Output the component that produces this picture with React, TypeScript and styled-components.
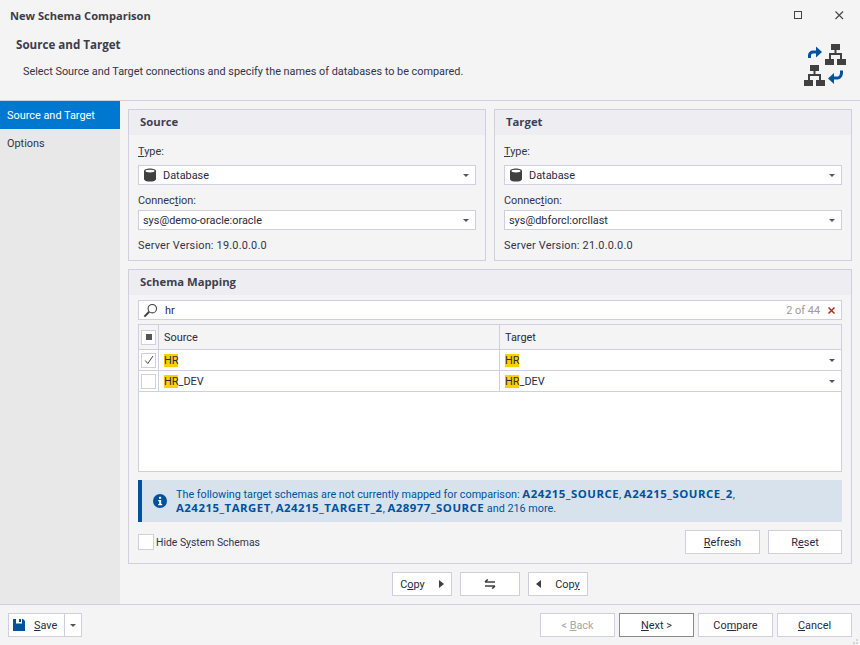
import React from 'react';
import styled, { createGlobalStyle } from 'styled-components';

const line = '#cfcfe0';
const ink = '#33334a';
const boldFont = `'Open Sans', 'Liberation Sans', sans-serif`;

const GlobalStyle = createGlobalStyle`
  html, body {
    margin: 0;
    padding: 0;
    background: #f4f4f5;
  }
  * {
    box-sizing: border-box;
  }
  u {
    text-underline-offset: 1px;
  }
`;

const Dialog = styled.div`
  width: 860px;
  height: 645px;
  display: flex;
  flex-direction: column;
  overflow: hidden;
  position: relative;
  background: #f4f4f5;
  color: ${ink};
  font-family: Roboto, 'Liberation Sans', sans-serif;
  font-size: 10.9px;
`;

const TitleBar = styled.div`
  height: 30px;
  flex: none;
  display: flex;
  align-items: center;
  justify-content: space-between;
  padding: 0 16px 0 10px;
`;

const Title = styled.div`
  font-family: ${boldFont};
  font-weight: 700;
  font-size: 11.1px;
  color: #3c3c4a;
`;

const WindowButtons = styled.div`
  display: flex;
  align-items: center;
  gap: 33px;
`;

const Header = styled.header`
  height: 71px;
  flex: none;
  display: flex;
  justify-content: space-between;
  border-bottom: 1px solid ${line};
  padding: 8px 10px 0 16px;
`;

const HeaderTitle = styled.div`
  font-family: ${boldFont};
  font-weight: 700;
  font-size: 11.6px;
  line-height: 14px;
  color: #3c3c4a;
`;

const HeaderText = styled.div`
  margin: 13px 0 0 7px;
  line-height: 14px;
  font-size: 10.85px;
`;

const Body = styled.div`
  flex: 1;
  min-height: 0;
  display: flex;
`;

const Sidebar = styled.nav`
  width: 120px;
  flex: none;
  background: #e8e8e8;
`;

const NavItem = styled.div<{ $active?: boolean }>`
  height: 28px;
  padding-left: 7px;
  display: flex;
  align-items: center;
  background: ${(p) => (p.$active ? '#0078d0' : 'transparent')};
  color: ${(p) => (p.$active ? '#fff' : ink)};
`;

const Content = styled.main`
  flex: 1;
  min-width: 0;
  padding: 8px 8px 0;
  display: flex;
  flex-direction: column;
`;

const TopRow = styled.div`
  display: grid;
  grid-template-columns: 358px 358px;
  gap: 8px;
`;

const Panel = styled.section<{ $grow?: boolean }>`
  border: 1px solid ${line};
  ${(p) => (p.$grow ? 'margin-top: 8px; height: 295px;' : 'height: 152px;')}
  display: flex;
  flex-direction: column;
`;

const PanelTitle = styled.div`
  height: 25px;
  flex: none;
  background: #eeeef2;
  display: flex;
  align-items: center;
  padding: 0 0 2px 11px;
  font-family: ${boldFont};
  font-weight: 700;
  font-size: 11.3px;
  color: #3f3f50;
`;

const PanelBody = styled.div<{ $top: number }>`
  padding: ${(p) => p.$top}px 9px 0;
  flex: 1;
  display: flex;
  flex-direction: column;
`;

const Label = styled.div<{ $before?: number; $after?: number }>`
  height: 14px;
  line-height: 16px;
  margin-top: ${(p) => p.$before ?? 0}px;
  margin-bottom: ${(p) => p.$after ?? 0}px;
`;

const ServerVersion = styled(Label)`
  letter-spacing: 0.2px;
`;

const Combo = styled.div`
  height: 20px;
  background: #fff;
  border: 1px solid ${line};
  display: flex;
  align-items: center;
  padding: 0 6px 0 4px;
  gap: 6px;
`;

const ComboText = styled.span`
  flex: 1;
  color: #2a2a40;
`;

const Caret = styled.i`
  width: 0;
  height: 0;
  flex: none;
  border-left: 3.5px solid transparent;
  border-right: 3.5px solid transparent;
  border-top: 3.5px solid #555;
`;

const SearchBox = styled.div`
  height: 20px;
  background: #fff;
  border: 1px solid ${line};
  display: flex;
  align-items: center;
  padding: 0 5px 0 4px;
  gap: 7px;
`;

const SearchText = styled.span`
  flex: 1;
  color: #2a2a40;
`;

const SearchCount = styled.span`
  color: #9a9aa0;
`;

const Grid = styled.div`
  height: 148px;
  margin-top: 4px;
  background: #fff;
  border: 1px solid ${line};
`;

const GridRow = styled.div<{ $head?: boolean }>`
  height: ${(p) => (p.$head ? '25px' : '21px')};
  display: grid;
  grid-template-columns: 20px 341px 1fr;
  background: ${(p) => (p.$head ? '#f4f4f5' : '#fff')};
  border-bottom: 1px solid ${line};
`;

const Cell = styled.div<{ $last?: boolean }>`
  display: flex;
  align-items: center;
  justify-content: ${(p) => (p.$last ? 'space-between' : 'flex-start')};
  padding: 0 ${(p) => (p.$last ? '6px' : '5px')} 0 5px;
  border-right: ${(p) => (p.$last ? 'none' : `1px solid ${line}`)};
  color: #2a2a40;
`;

const CheckCell = styled(Cell)`
  padding: 0;
  justify-content: center;
`;

const CheckBox = styled.span<{ $size?: number }>`
  width: ${(p) => p.$size ?? 16}px;
  height: ${(p) => p.$size ?? 16}px;
  flex: none;
  display: flex;
  align-items: center;
  justify-content: center;
  background: #fff;
  border: 1px solid ${line};
`;

const CheckMark = styled.span`
  width: 6px;
  height: 6px;
  background: #555;
`;

const Mark = styled.mark`
  background: #ffd000;
  color: inherit;
`;

const InfoBar = styled.div`
  height: 42px;
  margin-top: 8px;
  background: #d8e2ec;
  border-left: 4px solid #00529c;
  display: flex;
  align-items: center;
  gap: 9px;
  padding-left: 11px;
  color: #00529c;
  line-height: 13px;
  font-size: 10.8px;
`;

const Strong = styled.b`
  font-family: ${boldFont};
  font-size: 11.4px;
  letter-spacing: 0.5px;
  font-weight: 700;
`;

const BottomRow = styled.div`
  margin-top: 8px;
  display: flex;
  align-items: center;
  justify-content: space-between;
`;

const CheckLabel = styled.label`
  display: flex;
  align-items: center;
  gap: 2px;
  font-size: 10.4px;
`;

const ButtonGroup = styled.div<{ $gap: number }>`
  display: flex;
  gap: ${(p) => p.$gap}px;
`;

const Button = styled.button<{ $w?: number; $focus?: boolean }>`
  width: ${(p) => p.$w ?? 75}px;
  height: 24px;
  padding: 0;
  background: #fff;
  border: 1px solid ${(p) => (p.$focus ? '#8a8a8a' : line)};
  font: inherit;
  color: ${(p) => (p.disabled ? '#a8a8b0' : '#2a2a40')};
  display: flex;
  align-items: center;
  justify-content: center;
  gap: 14px;
`;

const CopyRow = styled.div`
  margin-top: 8px;
  display: flex;
  justify-content: center;
  gap: 8px;
`;

const Footer = styled.footer`
  height: 41px;
  flex: none;
  border-top: 1px solid ${line};
  padding: 8px 8px 0;
  display: flex;
  justify-content: space-between;
`;

const SplitButton = styled.div`
  display: flex;
  height: 24px;
  border: 1px solid ${line};
  background: #fff;
`;

const SaveMain = styled.div`
  width: 56px;
  display: flex;
  align-items: center;
  gap: 9px;
  padding-left: 4px;
  border-right: 1px solid ${line};
  color: #2a2a40;
`;

const SaveDrop = styled.div`
  width: 16px;
  display: flex;
  align-items: center;
  justify-content: center;
`;

const Grip = styled.svg`
  position: absolute;
  right: 1px;
  bottom: 0;
`;

const DbIcon = () => (
  <svg width="14" height="14" viewBox="0 0 14 14">
    <path d="M1 3c0-1.6 2.7-2.6 6-2.6s6 1 6 2.6v8c0 1.6-2.7 2.6-6 2.6s-6-1-6-2.6z" fill="#404040" />
    <ellipse cx="7" cy="3.1" rx="4.6" ry="1.4" fill="#fff" />
  </svg>
);

// one small org-chart block, drawn from its top-left corner
const Tree: React.FC<{ x: number; y: number }> = ({ x, y }) => (
  <g fill="#404040" transform={`translate(${x} ${y})`}>
    <rect x="6" y="0" width="9" height="6" />
    <rect x="9.5" y="6" width="2" height="3" />
    <rect x="4" y="9" width="13" height="2" />
    <rect x="4" y="11" width="2" height="4" />
    <rect x="15" y="11" width="2" height="4" />
    <rect x="0" y="15" width="9" height="6" />
    <rect x="12" y="15" width="9" height="6" />
  </g>
);

const SchemaIcon = () => (
  <svg width="50" height="50" viewBox="0 -2 50 50">
    <Tree x={25} y={4} />
    <Tree x={4} y={25} />
    <g fill="none" stroke="#00529c" strokeWidth="3">
      <path d="M9.5 18v-2.5c0-2 1.5-3.5 3.5-3.5h4" />
      <path d="M41.5 30.5v2.5c0 2-1.5 5-3.5 5h-4" />
    </g>
    <path d="M16 6.5l6 5.5-6 5.5z" fill="#00529c" />
    <path d="M34 33l-6 5.5 6 5.5z" fill="#00529c" />
  </svg>
);

const SearchIcon = () => (
  <svg width="15" height="15" viewBox="0 0 15 15" fill="none" stroke="#404040">
    <circle cx="9.3" cy="5.7" r="4.2" strokeWidth="1.1" />
    <path d="M6.2 8.8L1.4 13.6" strokeWidth="2" />
  </svg>
);

const CloseX = () => (
  <svg width="9" height="9" viewBox="0 0 9 9" stroke="#a83a2c" strokeWidth="1.6">
    <path d="M1.5 1.5l6 6M7.5 1.5l-6 6" />
  </svg>
);

const Tick = () => (
  <svg width="10" height="10" viewBox="0 0 10 10" fill="none" stroke="#444">
    <path d="M1.2 5.5l2.6 3L9 1" />
  </svg>
);

const InfoIcon = () => (
  <svg width="14" height="14" viewBox="0 0 14 14">
    <circle cx="7" cy="7" r="7" fill="#00529c" />
    <rect x="6" y="2.8" width="2.2" height="2" fill="#fff" />
    <path d="M5.2 6h3v4h1v1.2H5.2V10h1V7.2h-1z" fill="#fff" />
  </svg>
);

const ArrowRight = () => (
  <svg width="5" height="8" viewBox="0 0 5 8">
    <path d="M0 0l5 4-5 4z" fill="#404040" />
  </svg>
);

const ArrowLeft = () => (
  <svg width="5" height="8" viewBox="0 0 5 8">
    <path d="M5 0L0 4l5 4z" fill="#404040" />
  </svg>
);

const SwapIcon = () => (
  <svg width="12" height="10" viewBox="0 0 12 10" fill="none" stroke="#404040" strokeWidth="1.6">
    <path d="M1 3h10M3.8 0.4L1 3M1 7h10M8.2 9.6L11 7" />
  </svg>
);

const SaveIcon = () => (
  <svg width="12" height="12" viewBox="0 0 12 12">
    <path d="M0 0h3v4.5h6V0h1l2 2v10H0z" fill="#00529c" />
    <rect x="6" y="0" width="2" height="3" fill="#00529c" />
  </svg>
);

const MaxBox = () => (
  <svg width="9" height="9" viewBox="0 0 9 9" fill="none" stroke="#444">
    <rect x="1.5" y="0.5" width="7" height="7" />
  </svg>
);

const CloseIcon = () => (
  <svg width="9" height="9" viewBox="0 0 9 9" stroke="#444" strokeWidth="1.1">
    <path d="M0.5 0.5l7.5 7.5M8 0.5L0.5 8" />
  </svg>
);

const ConnectionPanel: React.FC<{ title: string; connection: string; version: string }> = ({
  title,
  connection,
  version,
}) => (
  <Panel>
    <PanelTitle>{title}</PanelTitle>
    <PanelBody $top={9}>
      <Label $after={7}>
        <u>T</u>ype:
      </Label>
      <Combo>
        <DbIcon />
        <ComboText>Database</ComboText>
        <Caret />
      </Combo>
      <Label $before={8} $after={3}>
        Connec<u>t</u>ion:
      </Label>
      <Combo>
        <ComboText>{connection}</ComboText>
        <Caret />
      </Combo>
      <ServerVersion $before={8}>Server Version: {version}</ServerVersion>
    </PanelBody>
  </Panel>
);

const mappings = [
  { rest: '', checked: true },
  { rest: '_DEV', checked: false },
];

export default function App() {
  return (
    <Dialog>
      <GlobalStyle />
      <TitleBar>
        <Title>New Schema Comparison</Title>
        <WindowButtons>
          <MaxBox />
          <CloseIcon />
        </WindowButtons>
      </TitleBar>
      <Header>
        <div>
          <HeaderTitle>Source and Target</HeaderTitle>
          <HeaderText>Select Source and Target connections and specify the names of databases to be compared.</HeaderText>
        </div>
        <SchemaIcon />
      </Header>
      <Body>
        <Sidebar>
          <NavItem $active>Source and Target</NavItem>
          <NavItem>Options</NavItem>
        </Sidebar>
        <Content>
          <TopRow>
            <ConnectionPanel title="Source" connection="sys@demo-oracle:oracle" version="19.0.0.0.0" />
            <ConnectionPanel title="Target" connection="sys@dbforcl:orcllast" version="21.0.0.0.0" />
          </TopRow>
          <Panel $grow>
            <PanelTitle>Schema Mapping</PanelTitle>
            <PanelBody $top={5}>
              <SearchBox>
                <SearchIcon />
                <SearchText>hr</SearchText>
                <SearchCount>2 of 44</SearchCount>
                <CloseX />
              </SearchBox>
              <Grid>
                <GridRow $head>
                  <CheckCell>
                    <CheckBox $size={15}>
                      <CheckMark />
                    </CheckBox>
                  </CheckCell>
                  <Cell>Source</Cell>
                  <Cell $last>Target</Cell>
                </GridRow>
                {mappings.map((m) => (
                  <GridRow key={m.rest}>
                    <CheckCell>
                      <CheckBox $size={15}>{m.checked && <Tick />}</CheckBox>
                    </CheckCell>
                    <Cell>
                      <span>
                        <Mark>HR</Mark>
                        {m.rest}
                      </span>
                    </Cell>
                    <Cell $last>
                      <span>
                        <Mark>HR</Mark>
                        {m.rest}
                      </span>
                      <Caret />
                    </Cell>
                  </GridRow>
                ))}
              </Grid>
              <InfoBar>
                <InfoIcon />
                <div>
                  The following target schemas are not currently mapped for comparison:{' '}
                  <Strong>A24215_SOURCE</Strong>, <Strong>A24215_SOURCE_2</Strong>,
                  <br />
                  <Strong>A24215_TARGET</Strong>, <Strong>A24215_TARGET_2</Strong>, <Strong>A28977_SOURCE</Strong> and 216
                  more.
                </div>
              </InfoBar>
              <BottomRow>
                <CheckLabel>
                  <CheckBox />
                  <span>
                    Hide S<u>y</u>stem Schemas
                  </span>
                </CheckLabel>
                <ButtonGroup $gap={8}>
                  <Button>
                    <span>
                      <u>R</u>efresh
                    </span>
                  </Button>
                  <Button $w={74}>
                    <span>
                      R<u>e</u>set
                    </span>
                  </Button>
                </ButtonGroup>
              </BottomRow>
            </PanelBody>
          </Panel>
          <CopyRow>
            <Button $w={60}>
              <span>
                C<u>o</u>py
              </span>
              <ArrowRight />
            </Button>
            <Button $w={60}>
              <SwapIcon />
            </Button>
            <Button $w={60}>
              <ArrowLeft />
              <span>
                Cop<u>y</u>
              </span>
            </Button>
          </CopyRow>
        </Content>
      </Body>
      <Footer>
        <SplitButton>
          <SaveMain>
            <SaveIcon />
            <span>
              <u>S</u>ave
            </span>
          </SaveMain>
          <SaveDrop>
            <Caret />
          </SaveDrop>
        </SplitButton>
        <ButtonGroup $gap={4}>
          <Button disabled>
            <span>
              &lt; <u>B</u>ack
            </span>
          </Button>
          <Button $focus>
            <span>
              <u>N</u>ext &gt;
            </span>
          </Button>
          <Button>
            <span>
              Co<u>m</u>pare
            </span>
          </Button>
          <Button>
            <span>
              <u>C</u>ancel
            </span>
          </Button>
        </ButtonGroup>
      </Footer>
      <Grip width="9" height="6" viewBox="0 0 9 6" fill="#d4d4dc">
        <rect x="6" y="0" width="2" height="2" />
        <rect x="3" y="3" width="2" height="2" />
        <rect x="6" y="3" width="2" height="2" />
      </Grip>
    </Dialog>
  );
}
